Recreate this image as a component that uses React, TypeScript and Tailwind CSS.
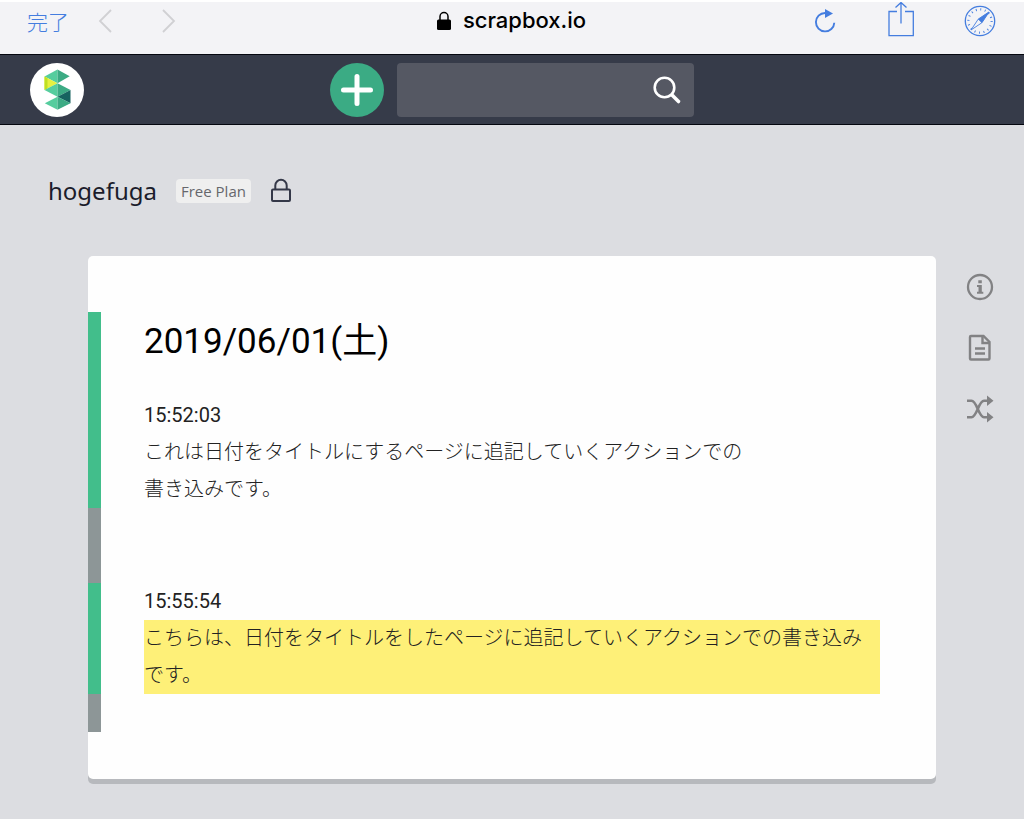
import React from "react";

const jp = "font-[Roboto,'Noto_Sans_CJK_JP',sans-serif]";

function BrowserBar() {
  return (
    <header className="flex h-[54px] items-start border-t-2 border-white bg-[#f3f3f6] text-[#447ddf]">
      <div className="flex flex-1 items-center pl-[27px]">
        <button className="h-9 text-[21px] leading-9 font-['Noto_Sans_CJK_JP',sans-serif] font-light">完了</button>
        <button aria-label="Back" className="ml-7 h-[38px] text-[#d0d0d3]">
          <svg width="16" height="24" viewBox="0 0 16 24" fill="none" stroke="currentColor" strokeWidth="1.8"><path d="M14 1 3 12l11 11" /></svg>
        </button>
        <button aria-label="Forward" className="ml-12 h-[38px] text-[#d0d0d3]">
          <svg width="16" height="24" viewBox="0 0 16 24" fill="none" stroke="currentColor" strokeWidth="1.8"><path d="m2 1 11 11L2 23" /></svg>
        </button>
      </div>
      <div className="flex h-[37px] items-center gap-3 text-[22px] font-medium text-black font-[Inter,sans-serif]">
        <svg width="14" height="19" viewBox="0 0 14 19"><path d="M3 9V5.5a4 4 0 0 1 8 0V9" fill="none" stroke="currentColor" strokeWidth="1.5" /><rect x="0" y="8.5" width="14" height="10.5" rx="1.5" fill="currentColor" /></svg>
        <span>scrapbox.io</span>
      </div>
      <div className="flex flex-1 items-start justify-end pr-7">
        <button aria-label="Reload" className="mr-[50px] mt-[6px]">
          <svg width="24" height="26" viewBox="0 0 24 26" fill="none"><path d="M21.3 14.7A9.2 9.2 0 1 1 12 5h3" stroke="currentColor" strokeWidth="1.9" /><path d="M12 1v9l8-4.6z" fill="currentColor" /></svg>
        </button>
        <button aria-label="Share" className="mr-[49px]">
          <svg width="28" height="36" viewBox="0 0 28 36" fill="none" stroke="currentColor" strokeWidth="1.3"><path d="M10 9.5H2v24.2h24.3V9.5H18M14 21.5V1M8.5 5.5 14 .5l5.5 5" /></svg>
        </button>
        <button aria-label="Open in Safari" className="mt-[3px]">
          <svg width="32" height="32" viewBox="0 0 32 32" fill="none" stroke="currentColor">
            <circle cx="16" cy="16" r="14.7" strokeWidth="1.3" />
            <circle cx="16" cy="16" r="11.6" strokeWidth="2.2" strokeDasharray=".9 3.655" />
            <path d="M25 7 17.8 17.8 7 25l7.2-10.8z" strokeWidth=".9" fill="#f3f3f6" />
            <path d="M25 7 17.8 17.8 14.2 14.2z" fill="currentColor" strokeWidth=".5" />
          </svg>
        </button>
      </div>
    </header>
  );
}

function NavBar() {
  return (
    <nav className="flex h-[71px] items-center border-y border-[#05070f] bg-[#363b49] px-[30px]">
      <div className="flex-1">
        <a href="#home" aria-label="Home" className="flex size-[54px] items-center justify-center rounded-full bg-white">
          <svg width="54" height="54" viewBox="0 0 54 54">
            <path d="M27.5 6.5 14.5 13.5l13 6.8z" fill="#56cd9e" />
            <path d="M27.5 6.5 39.7 13.3l-12.2 7z" fill="#3cab84" />
            <path d="M14.5 13.5 27.5 20.3 14.5 27z" fill="#e6f140" />
            <path d="M14.5 13.5 17.5 15v10.4L14.5 27z" fill="#bfe022" />
            <path d="M14.5 27 27.5 20.3v13.4z" fill="#56cd9e" />
            <path d="M27.5 20.3 40.5 27l-13 6.7z" fill="#3cab84" />
            <path d="M40.5 27v13.2l-13-6.5z" fill="#16635f" />
            <path d="M27.5 33.7v13L14.8 40.2z" fill="#56cd9e" />
            <path d="M27.5 33.7 40.5 40.2l-13 6.5z" fill="#3cab84" />
          </svg>
        </a>
      </div>
      <div className="flex items-center gap-[13px]">
        <button aria-label="New page" className="flex size-[54px] items-center justify-center rounded-full bg-[#3bab84] text-white">
          <svg width="32" height="32" viewBox="0 0 32 32" stroke="currentColor" strokeWidth="5" strokeLinecap="round"><path d="M16 2.5v27M2.5 16h27" /></svg>
        </button>
        <label className="flex h-[54px] w-[297px] items-center rounded-[4px] bg-[#555863] pr-3 text-white">
          <input type="search" aria-label="Search" className="min-w-0 flex-1 bg-transparent px-4 text-xl outline-none" />
          <svg width="30" height="30" viewBox="0 0 30 30" fill="none" stroke="currentColor" strokeLinecap="round"><circle cx="12.5" cy="12.5" r="9.8" strokeWidth="2.6" /><path d="m20.5 20.5 6 6" strokeWidth="3.6" /></svg>
        </label>
      </div>
      <div className="flex-1" />
    </nav>
  );
}

function Bar({ active, children }: { active: boolean; children: React.ReactNode }) {
  return (
    <div className={active ? "border-l-[13px] border-[#42be8b] pl-[43px]" : "border-l-[13px] border-[#8d9697] pl-[43px]"}>
      {children}
    </div>
  );
}

export default function App() {
  return (
    <div className="min-h-screen bg-[#dcdde1]">
      <BrowserBar />
      <NavBar />
      <div className="flex items-center gap-[19px] pl-12 pt-[46px] text-[#1b1c2b] font-['Noto_Sans','Open_Sans',sans-serif]">
        <a href="#project" className="text-2xl leading-10">hogefuga</a>
        <span className="rounded-[4px] bg-[#efefef] px-[5px] text-[15px] leading-6 text-[#66676c] font-['Open_Sans',sans-serif]">Free Plan</span>
        <svg width="22" height="26" viewBox="0 0 22 26" fill="none" stroke="#343848" strokeWidth="2"><rect x="2" y="11.5" width="18" height="11.5" rx="1" /><path d="M5.3 11V7.5a5.7 5.7 0 0 1 11.4 0V11" /></svg>
      </div>
      <div className="flex pb-9 pl-[88px] pt-[45px]">
        <main className={`flex-1 rounded-[5px] bg-[#fefefe] pb-[47px] pr-14 pt-14 text-xl leading-[37px] text-[#222] shadow-[0_5px_0_#b7b9bd] ${jp}`}>
          <Bar active>
            <h1 className="h-[85px] text-[35px] leading-[60px] text-black">2019/06/01(土)</h1>
            <p>15:52:03</p>
            <p className="font-light">これは日付をタイトルにするページに追記していくアクションでの<br />書き込みです。</p>
          </Bar>
          <Bar active={false}><div className="h-[75px]" /></Bar>
          <Bar active>
            <p>15:55:54</p>
            <p className="bg-[#fef078] font-light">こちらは、日付をタイトルをしたページに追記していくアクションでの書き込みです。</p>
          </Bar>
          <Bar active={false}><div className="h-[38px]" /></Bar>
        </main>
        <aside className="flex w-[88px] flex-col items-center gap-[33px] pt-[17px] text-[#828284]">
          <button aria-label="Page info">
            <svg width="28" height="28" viewBox="0 0 28 28" fill="none"><circle cx="14" cy="14" r="12" stroke="currentColor" strokeWidth="2.3" /><path d="M12.3 7.3h3.5v3h-3.5zM11 12h4.8v6.7H17.3v2H11v-2h1.5V14H11z" fill="currentColor" /></svg>
          </button>
          <button aria-label="Page menu">
            <svg width="28" height="28" viewBox="0 0 28 28" fill="none" stroke="currentColor" strokeWidth="2.4"><path d="M5 2h12.5l6 6v16.5a1 1 0 0 1-1 1H5a1 1 0 0 1-1-1V3a1 1 0 0 1 1-1z" /><path d="M16.5 2v7h7M9 14.5h10M9 19.5h10" /></svg>
          </button>
          <button aria-label="Random page">
            <svg width="28" height="28" viewBox="0 0 28 28" fill="none"><path d="M1 5.8h4.5C11 5.8 12.5 22.2 18 22.2h4M1 22.2h4.5C11 22.2 12.5 5.8 18 5.8h4" stroke="currentColor" strokeWidth="2.6" /><path d="M21 .5v10.6l6.5-5.3zM21 16.9v10.6l6.5-5.3z" fill="currentColor" /></svg>
          </button>
        </aside>
      </div>
    </div>
  );
}
